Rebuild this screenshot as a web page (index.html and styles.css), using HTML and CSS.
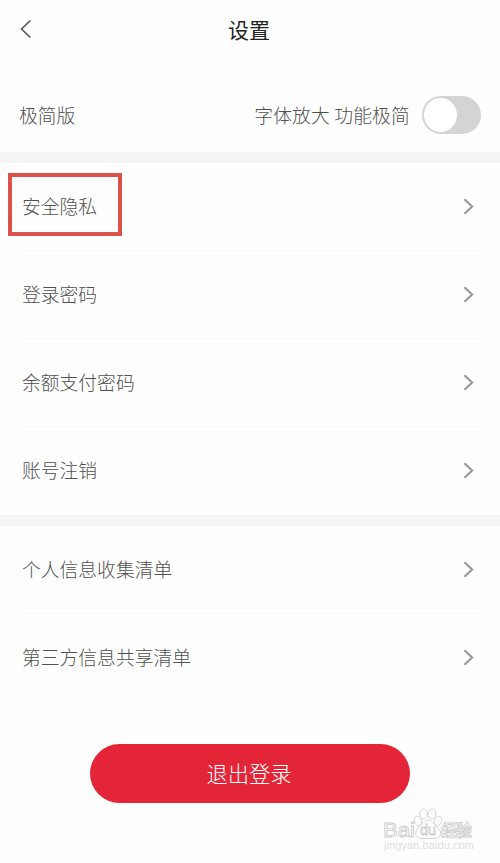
FILE: index.html
```
<!DOCTYPE html>
<html lang="zh-CN">
<head>
  <meta charset="UTF-8">
  <meta name="viewport" content="width=device-width, initial-scale=1.0">
  <title>设置</title>
  <link rel="stylesheet" href="styles.css">
</head>
<body>
  <header class="header">
    <svg class="back" viewBox="0 0 12 20"><path d="M10.5 1.5L1.5 10l9 8.5"/></svg>
    <h1>设置</h1>
  </header>

  <div class="simple">
    <span>极简版</span>
    <span class="hint">字体放大 功能极简</span>
    <div class="switch"><div class="knob"></div></div>
  </div>

  <div class="group">
    <div class="row">
      <span>安全隐私</span>
      <svg class="arrow" viewBox="0 0 10 16"><path d="M1.2 1.2L8.4 8l-7.2 6.8"/></svg>
      <div class="mark"></div>
    </div>
    <div class="row">
      <span>登录密码</span>
      <svg class="arrow" viewBox="0 0 10 16"><path d="M1.2 1.2L8.4 8l-7.2 6.8"/></svg>
    </div>
    <div class="row">
      <span>余额支付密码</span>
      <svg class="arrow" viewBox="0 0 10 16"><path d="M1.2 1.2L8.4 8l-7.2 6.8"/></svg>
    </div>
    <div class="row">
      <span>账号注销</span>
      <svg class="arrow" viewBox="0 0 10 16"><path d="M1.2 1.2L8.4 8l-7.2 6.8"/></svg>
    </div>
  </div>

  <div class="group">
    <div class="row">
      <span>个人信息收集清单</span>
      <svg class="arrow" viewBox="0 0 10 16"><path d="M1.2 1.2L8.4 8l-7.2 6.8"/></svg>
    </div>
    <div class="row">
      <span>第三方信息共享清单</span>
      <svg class="arrow" viewBox="0 0 10 16"><path d="M1.2 1.2L8.4 8l-7.2 6.8"/></svg>
    </div>
  </div>

  <button class="logout">退出登录</button>

  <svg class="watermark" viewBox="0 0 100 48">
    <g class="paw">
      <ellipse cx="36" cy="14" rx="3.6" ry="4.8" transform="rotate(-20 36 14)"/>
      <ellipse cx="41.500" cy="7" rx="3.8" ry="5"/>
      <ellipse cx="50" cy="7" rx="3.8" ry="5" transform="rotate(10 50 7)"/>
      <ellipse cx="56" cy="14" rx="3.6" ry="4.8" transform="rotate(25 56 14)"/>
      <path d="M46 13c-4 0-5.500 4-9 7-6 5-3 11.500 2 11.500h14c5.500 0 8-6.500 2-11.500-3.500-3-5-7-9-7z"/>
    </g>
    <text class="logo" x="1" y="30" textLength="32" lengthAdjust="spacingAndGlyphs">Bai</text>
    <text class="du" x="38" y="28" textLength="16" lengthAdjust="spacingAndGlyphs">du</text>
    <text class="cn" x="59" y="29" textLength="31">经验</text>
    <text class="url" x="2" y="42" textLength="90">jingyan.baidu.com</text>
  </svg>
</body>
</html>
```
FILE: styles.css
```
* {
  box-sizing: border-box;
}
body {
  margin: 0;
  height: 863px;
  position: relative;
  overflow: hidden;
  background: #fefefe;
  color: #505050;
  font-family: "Noto Sans CJK SC", sans-serif;
  font-size: 18.8px;
  font-weight: 300;
  line-height: 28px;
}
.header {
  display: flex;
  align-items: center;
  height: 58px;
  padding: 0 20px;
}
.header h1 {
  flex: 1;
  margin: 0 14px 0 0;
  color: #222;
  font-size: 21px;
  font-weight: 400;
  text-align: center;
}
.back {
  width: 12px;
  height: 20px;
  fill: none;
  stroke: #555;
  stroke-width: 1.6;
}
.simple {
  display: flex;
  align-items: center;
  height: 94px;
  padding: 20px 19px 0;
}
.simple span {
  padding-bottom: 1px;
}
.hint {
  margin-left: auto;
  letter-spacing: 0.15px;
}
.switch {
  width: 59px;
  height: 38px;
  margin-left: 12px;
  padding: 2px;
  border-radius: 19px;
  background: #d4d4d4;
}
.knob {
  width: 33px;
  height: 34px;
  border-radius: 50%;
  background: #fff;
}
.group {
  padding: 0 20px;
  border-top: 11px solid #f5f5f5;
}
.row {
  display: flex;
  align-items: center;
  justify-content: space-between;
  position: relative;
  height: 88px;
  padding: 0 6px 0 2px;
  border-bottom: 1px solid #f6f6f6;
}
.row span {
  padding-bottom: 2px;
}
.row:last-child {
  border-bottom-color: transparent;
}
.arrow {
  width: 11px;
  height: 17px;
  fill: none;
  stroke: #999;
  stroke-width: 2;
}
/* red frame around the highlighted entry */
.mark {
  position: absolute;
  left: -12px;
  top: 10px;
  width: 114px;
  height: 63px;
  border: 4px solid #dc5249;
}
.logout {
  display: block;
  width: 320px;
  height: 59px;
  margin: 42px auto 0;
  padding: 0 2px 2px 0;
  border: none;
  border-radius: 30px;
  background: #e42437;
  color: #fff;
  font: inherit;
  font-size: 21.3px;
}
.watermark {
  position: absolute;
  left: 382px;
  top: 807px;
  width: 100px;
  height: 48px;
  fill: #fff;
  stroke: #ccc;
  stroke-width: 0.8;
  font-family: "Liberation Sans", "Noto Sans CJK SC", sans-serif;
}
.logo {
  font-size: 20px;
}
.du {
  font-size: 14px;
}
.cn {
  font-size: 16px;
  font-weight: bold;
}
.url {
  font-size: 11px;
  fill: #ddd;
  stroke: none;
}
```
